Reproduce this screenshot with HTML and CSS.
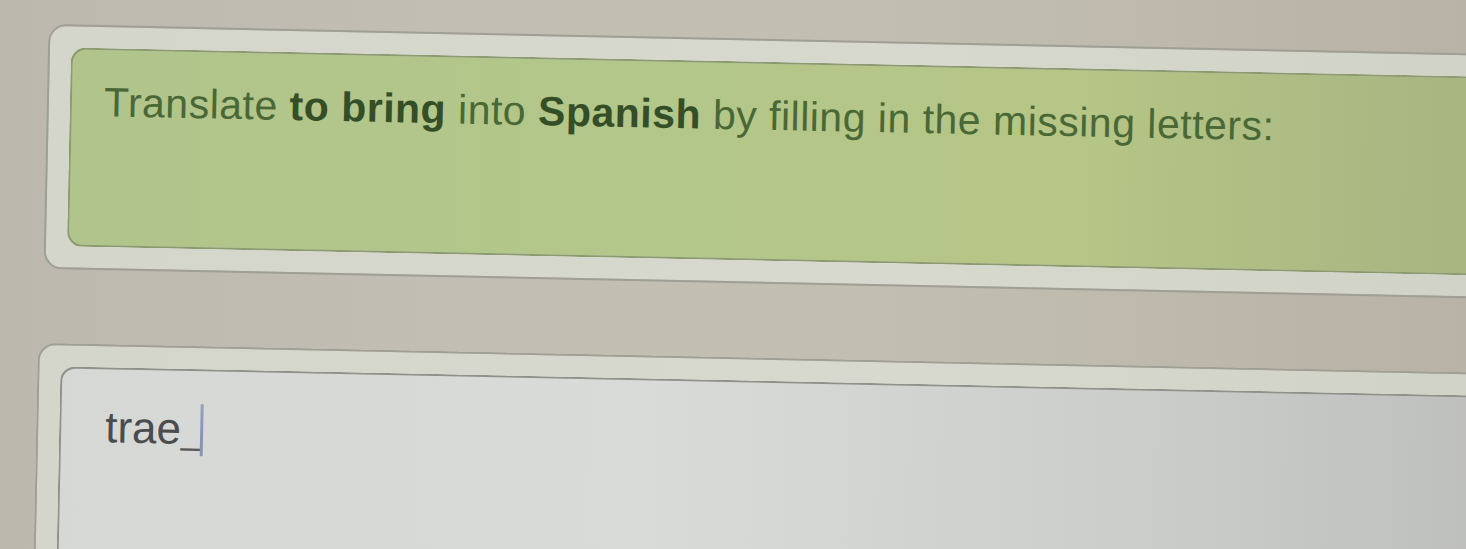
FILE: index.html
```html
<!DOCTYPE html>
<html lang="en">
<head>
<meta charset="utf-8">
<title>Translate exercise</title>
<link rel="stylesheet" href="styles.css">
</head>
<body>
<main class="stage">
  <section class="frame frame-prompt">
    <div class="prompt">
      <p class="prompt-text">Translate <strong>to bring</strong> into <strong>Spanish</strong> by filling in the missing letters:</p>
    </div>
  </section>
  <section class="frame frame-answer">
    <div class="answer-box">
      <p class="answer-text">trae<span class="blank">_</span><span class="caret"></span></p>
    </div>
  </section>
</main>
</body>
</html>
```

FILE: styles.css
```css
html, body {
  margin: 0;
  padding: 0;
}

body {
  width: 1466px;
  height: 549px;
  overflow: hidden;
  background: linear-gradient(90deg, #bcb8ae 0%, #c3beb3 30%, #c2bfb2 60%, #b9b2a6 100%);
  font-family: "Liberation Sans", Arial, sans-serif;
}

.stage {
  width: 1700px;
  padding: 23px 0 0 45px;
  display: flex;
  flex-direction: column;
  gap: 74px;
  transform: rotate(1.18deg);
  transform-origin: 0 0;
}

.frame {
  border: 2px solid #a09f95;
  border-radius: 18px;
  background: linear-gradient(90deg, #d5d6cb 0%, #d8d9ce 50%, #cfd0c4 100%);
  padding: 21px 0 21px 21px;
}

.frame-prompt {
  margin-left: 4px;
}

.prompt {
  height: 199px;
  box-sizing: border-box;
  border: 2px solid #8c9a6f;
  border-right: none;
  border-radius: 15px 0 0 15px;
  background: linear-gradient(90deg, #b1c48b 0%, #b3c78a 35%, #b5c686 60%, #a9b882 80%, #9eaa7f 100%);
  padding: 29px 0 0 32px;
}

.prompt-text {
  margin: 0;
  font-size: 41px;
  letter-spacing: 0.5px;
  line-height: 46px;
  color: #4a6836;
  white-space: nowrap;
}

.prompt-text strong {
  font-weight: 700;
  color: #344e27;
}

.frame-answer {
  padding-bottom: 0;
  border-bottom: none;
  border-radius: 18px 0 0 0;
}

.answer-box {
  height: 240px;
  border: 2px solid #8f918a;
  border-right: none;
  border-bottom: none;
  border-radius: 15px 0 0 0;
  background: linear-gradient(90deg, #d6d8d5 0%, #d9dbd8 35%, #cbcdca 65%, #b4b5b2 100%);
  padding: 33px 0 0 44px;
}

.answer-text {
  margin: 0;
  font-size: 44px;
  line-height: 50px;
  color: #4a4c4d;
  white-space: nowrap;
}

.blank {
  color: #55585a;
  font-size: 34px;
}

.caret {
  display: inline-block;
  width: 3px;
  height: 52px;
  vertical-align: -12px;
  background: linear-gradient(180deg, #9aa2b4 0%, #8795c3 50%, #8a93aa 100%);
}
```
